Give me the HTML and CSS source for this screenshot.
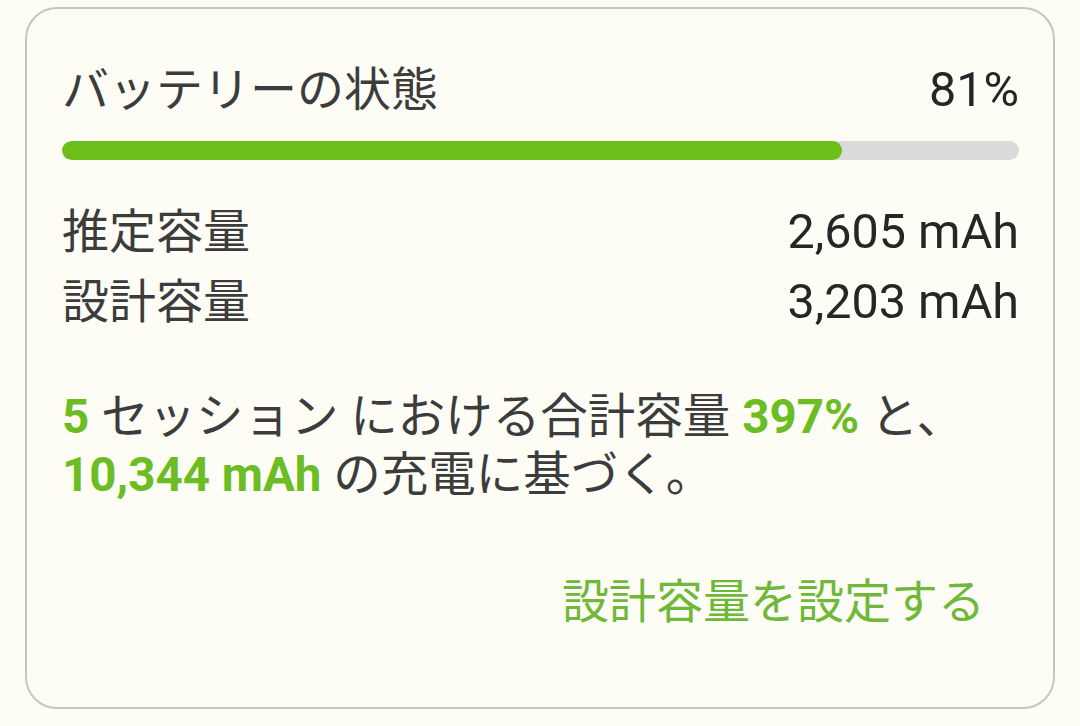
FILE: index.html
```html
<!DOCTYPE html>
<html lang="ja">
<head>
<meta charset="utf-8">
<link rel="stylesheet" href="styles.css">
</head>
<body>
<div class="card">
  <div class="head">
    <span class="label">バッテリーの状態</span>
    <span class="value">81%</span>
  </div>
  <div class="bar"><div class="fill" style="width:81.5%"></div></div>
  <div class="rows">
    <div class="row"><span class="label">推定容量</span><span class="value">2,605 mAh</span></div>
    <div class="row"><span class="label">設計容量</span><span class="value">3,203 mAh</span></div>
  </div>
  <p class="note"><b>5</b> セッション における合計容量 <b>397%</b> と、<br><b>10,344 mAh</b> の充電に基づく。</p>
  <div class="actions"><span class="link">設計容量を設定する</span></div>
</div>
</body>
</html>
```
FILE: styles.css
```css
html, body {
  margin: 0;
  padding: 0;
  background: #fdfdf5;
}
body {
  font-family: Roboto, "Noto Sans CJK JP", sans-serif;
  color: #3c3c3c;
  font-size: 47px;
}
.card {
  box-sizing: border-box;
  margin: 7px 0 0 25px;
  width: 1030px;
  height: 702px;
  border: 2px solid #c6c6be;
  border-radius: 32px;
  padding: 51px 34px 0 35px;
  display: flex;
  flex-direction: column;
}
.head, .row {
  display: flex;
  justify-content: space-between;
  align-items: center;
}
.head {
  line-height: 60px;
}
.value {
  color: #262626;
  font-size: 48.5px;
}
.bar {
  margin-top: 21px;
  height: 19px;
  border-radius: 10px;
  background: #dadada;
  overflow: hidden;
}
.fill {
  height: 100%;
  background: #6cbf18;
  border-radius: 10px;
}
.rows {
  margin-top: 37px;
}
.row {
  line-height: 70px;
}
.note {
  margin: 51px 0 0;
  line-height: 58px;
  font-size: 47.5px;
}
.note b {
  color: #6cbc24;
  font-weight: 700;
}
.actions {
  margin-top: 68px;
  display: flex;
  justify-content: flex-end;
  padding-right: 34px;
}
.link {
  color: #6fb83a;
  line-height: 60px;
}
```
